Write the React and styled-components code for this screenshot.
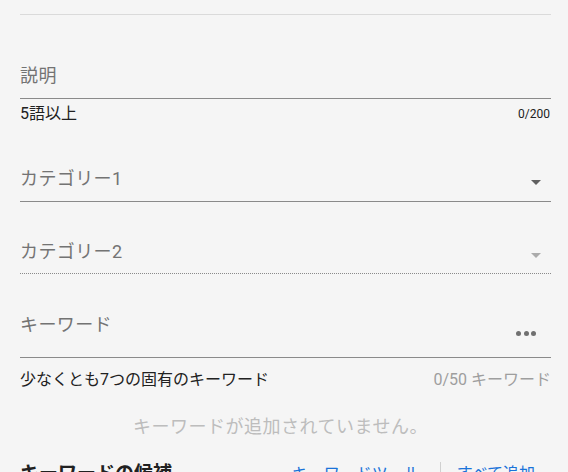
import React from "react";
import styled, { createGlobalStyle } from "styled-components";

const Global = createGlobalStyle`
  html, body { margin: 0; padding: 0; background: #f5f5f5; }
  body { font-family: Roboto, "Noto Sans CJK JP", sans-serif; overflow: hidden; }
`;

const Page = styled.div`
  padding: 14px 17px 0 20px;
  height: 472px;
  box-sizing: border-box;
  overflow: hidden;
`;

const Rule = styled.div`
  height: 1px;
  background: #dadada;
`;

const Field = styled.div`
  margin-top: ${(p) => p.$gap}px;
  display: flex;
  align-items: flex-start;
  padding-bottom: ${(p) => p.$pad}px;
  border-bottom: 1px ${(p) => (p.$dotted ? "dotted" : "solid")} #8a8a8a;
`;

const Label = styled.div`
  flex: 1;
  font-size: 18px;
  line-height: 24px;
  color: #737373;
  letter-spacing: 0.4px;
`;

const Arrow = styled.div`
  margin: 13px 10px 0 0;
  width: 0;
  height: 0;
  border-left: 5px solid transparent;
  border-right: 5px solid transparent;
  border-top: 5px solid ${(p) => (p.$disabled ? "#ababab" : "#606060")};
`;

const Dots = styled.div`
  margin: 18px 15px 0 0;
  display: flex;
  gap: 2.5px;
`;

const Dot = styled.span`
  width: 5px;
  height: 5px;
  border-radius: 50%;
  background: #707070;
`;

const Helper = styled.div`
  margin-top: ${(p) => p.$gap}px;
  display: flex;
  justify-content: space-between;
  align-items: center;
  font-size: 16px;
  line-height: 20px;
  color: #212121;
`;

const Counter = styled.span`
  font-size: ${(p) => p.$size}px;
  color: ${(p) => p.$color};
  margin-right: ${(p) => p.$mr || 0}px;
`;

const Empty = styled.div`
  margin-top: 25px;
  text-align: center;
  font-size: 18px;
  line-height: 24px;
  color: #bdbdbd;
  padding-right: 10px;
  letter-spacing: 0.5px;
`;

const Suggest = styled.div`
  margin-top: 21px;
  display: flex;
  align-items: center;
  padding-right: 16px;
`;

const Heading = styled.div`
  flex: 1;
  font-size: 19px;
  line-height: 28px;
  font-weight: 700;
  color: #212121;
`;

const Link = styled.a`
  font-size: 16px;
  line-height: 28px;
  color: #1a73d9;
  text-decoration: none;
`;

const VSep = styled.span`
  width: 1px;
  height: 24px;
  background: #d0d0d0;
  margin: 0 16px 0 20px;
`;

export default function App() {
  return (
    <>
      <Global />
      <Page>
        <Rule />
        <Field $gap={49} $pad={10}>
          <Label>説明</Label>
        </Field>
        <Helper $gap={5}>
          <span>5語以上</span>
          <Counter $size={12} $color="#212121" $mr={1}>0/200</Counter>
        </Helper>

        <Field $gap={43} $pad={10}>
          <Label>カテゴリー1</Label>
          <Arrow />
        </Field>

        <Field $gap={38} $pad={9} $dotted>
          <Label>カテゴリー2</Label>
          <Arrow $disabled />
        </Field>

        <Field $gap={39} $pad={20}>
          <Label>キーワード</Label>
          <Dots>
            <Dot />
            <Dot />
            <Dot />
          </Dots>
        </Field>
        <Helper $gap={12}>
          <span>少なくとも7つの固有のキーワード</span>
          <Counter $size={16} $color="#9e9e9e">0/50 キーワード</Counter>
        </Helper>

        <Empty>キーワードが追加されていません。</Empty>

        <Suggest>
          <Heading>キーワードの候補</Heading>
          <Link href="#">キーワードツール</Link>
          <VSep />
          <Link href="#">すべて追加</Link>
        </Suggest>
      </Page>
    </>
  );
}
